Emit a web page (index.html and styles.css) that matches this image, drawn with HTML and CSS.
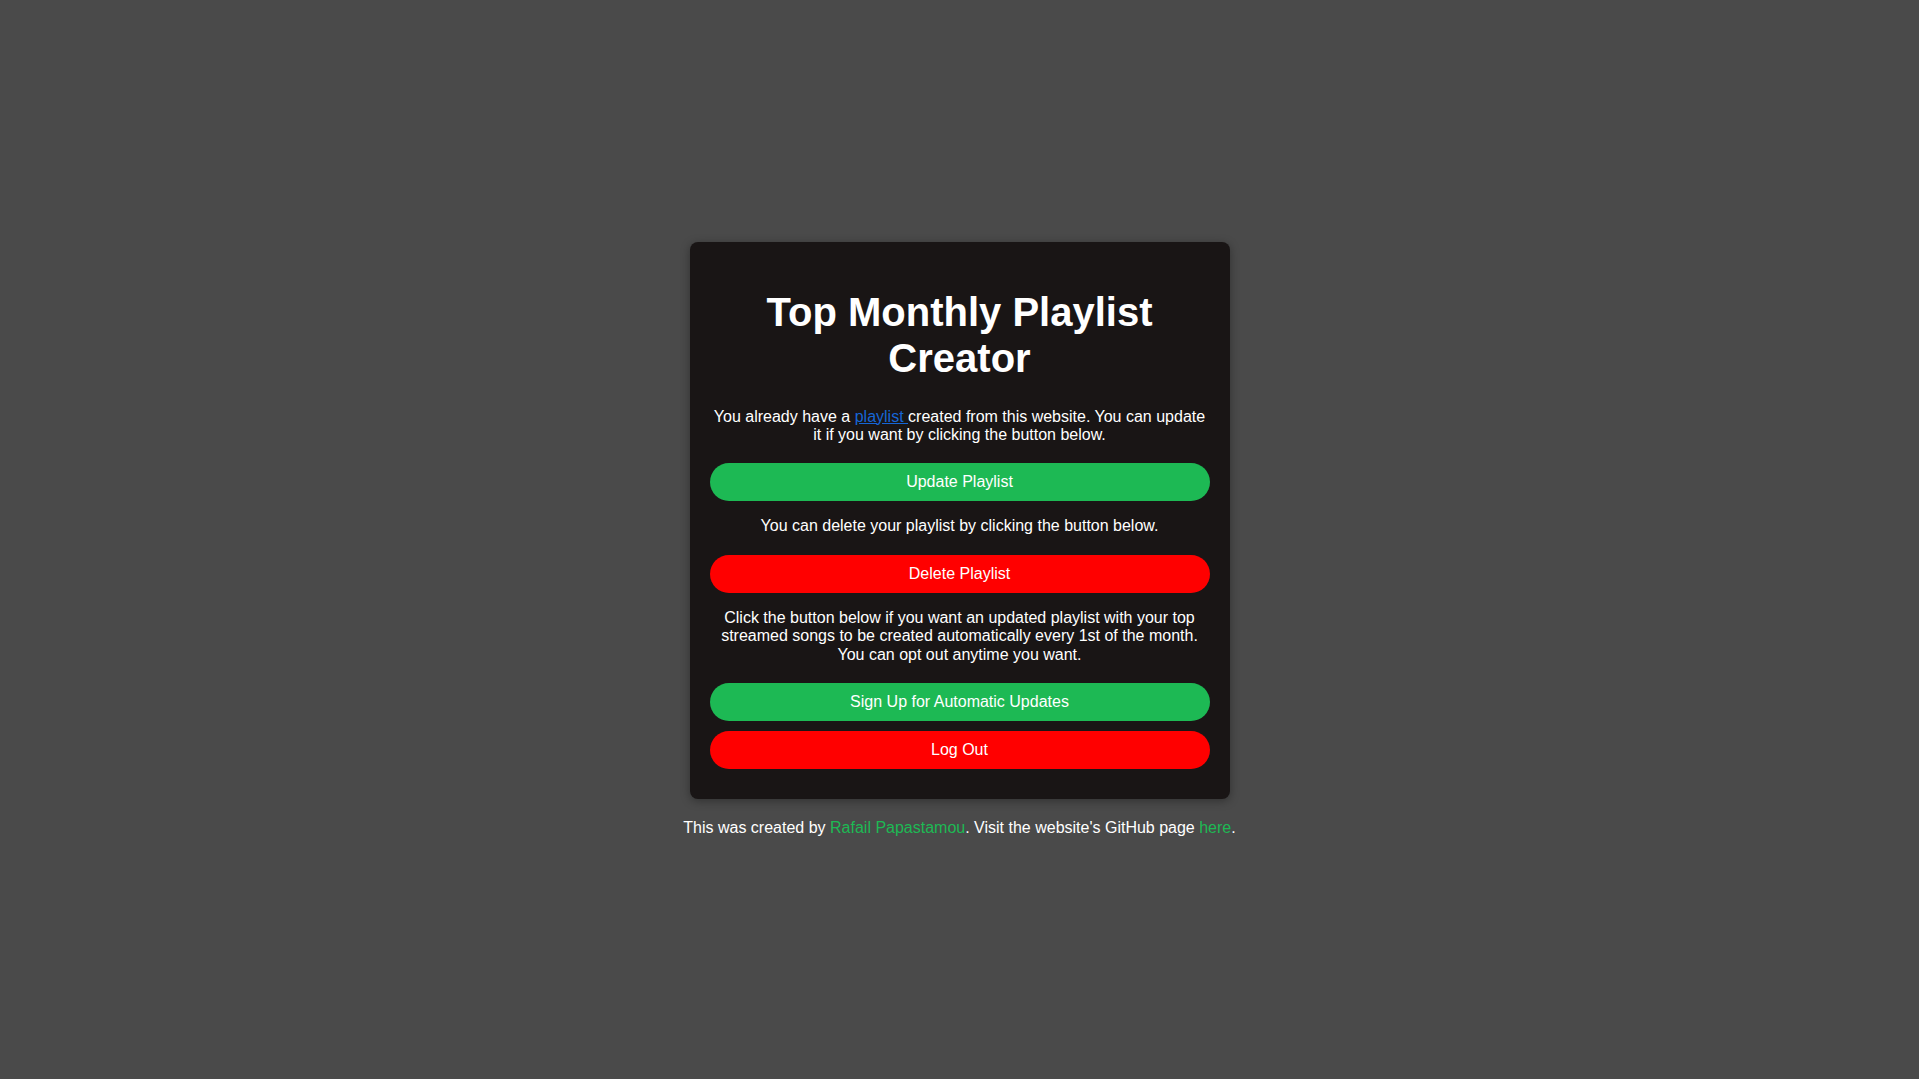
FILE: index.html
```html
<!DOCTYPE html>
<html lang="en">
<head>
<meta charset="utf-8">
<title>Top Monthly Playlist Creator</title>
<link rel="stylesheet" href="styles.css">
</head>
<body>
<main class="page">
  <section class="card">
    <h1 class="title">Top Monthly Playlist Creator</h1>
    <p class="text text-first">You already have a <a class="link" href="#">playlist </a>created from this website. You can update it if you want by clicking the button below.</p>
    <button class="btn btn-green btn-after-text">Update Playlist</button>
    <p class="text text-after-btn">You can delete your playlist by clicking the button below.</p>
    <button class="btn btn-red btn-after-text">Delete Playlist</button>
    <p class="text text-after-btn">Click the button below if you want an updated playlist with your top streamed songs to be created automatically every 1st of the month. You can opt out anytime you want.</p>
    <button class="btn btn-green btn-after-text">Sign Up for Automatic Updates</button>
    <button class="btn btn-red btn-stacked">Log Out</button>
  </section>
  <p class="footer">This was created by <a class="footer-link" href="#">Rafail Papastamou</a>. Visit the website's GitHub page <a class="footer-link" href="#">here</a>.</p>
</main>
</body>
</html>
```

FILE: styles.css
```css
html, body {
  margin: 0;
  padding: 0;
  height: 100%;
}

body {
  background: #4a4a4a;
  font-family: "Liberation Sans", Arial, sans-serif;
  font-size: 16px;
  color: #ffffff;
}

.page {
  min-height: 100vh;
  display: flex;
  flex-direction: column;
  align-items: center;
  justify-content: center;
}

.card {
  width: 540px;
  box-sizing: border-box;
  padding: 20px 20px 30px;
  background: #191515;
  border-radius: 8px;
  box-shadow: 0 2px 10px rgba(0, 0, 0, 0.35);
  display: flex;
  flex-direction: column;
  text-align: center;
}

.title {
  margin: 27px 0 27px;
  font-size: 40px;
  font-weight: bold;
  line-height: 46px;
}

.text {
  margin: 0;
  line-height: 18.4px;
  padding: 0 2px;
}

.text-after-btn {
  margin-top: 16px;
}

.link {
  color: #1666d6;
  text-decoration: underline;
}

.btn {
  display: block;
  width: 100%;
  height: 38px;
  border: none;
  border-radius: 19px;
  font-family: "Liberation Sans", Arial, sans-serif;
  font-size: 16px;
  color: #ffffff;
  padding: 0;
  cursor: pointer;
}

.btn-after-text {
  margin-top: 19px;
}

.btn-stacked {
  margin-top: 10px;
}

.btn-green {
  background: #1db954;
}

.btn-red {
  background: #ff0000;
}

.footer {
  margin: 20px 0 0;
  line-height: 18.4px;
}

.footer-link {
  color: #1db954;
  text-decoration: none;
}
```
